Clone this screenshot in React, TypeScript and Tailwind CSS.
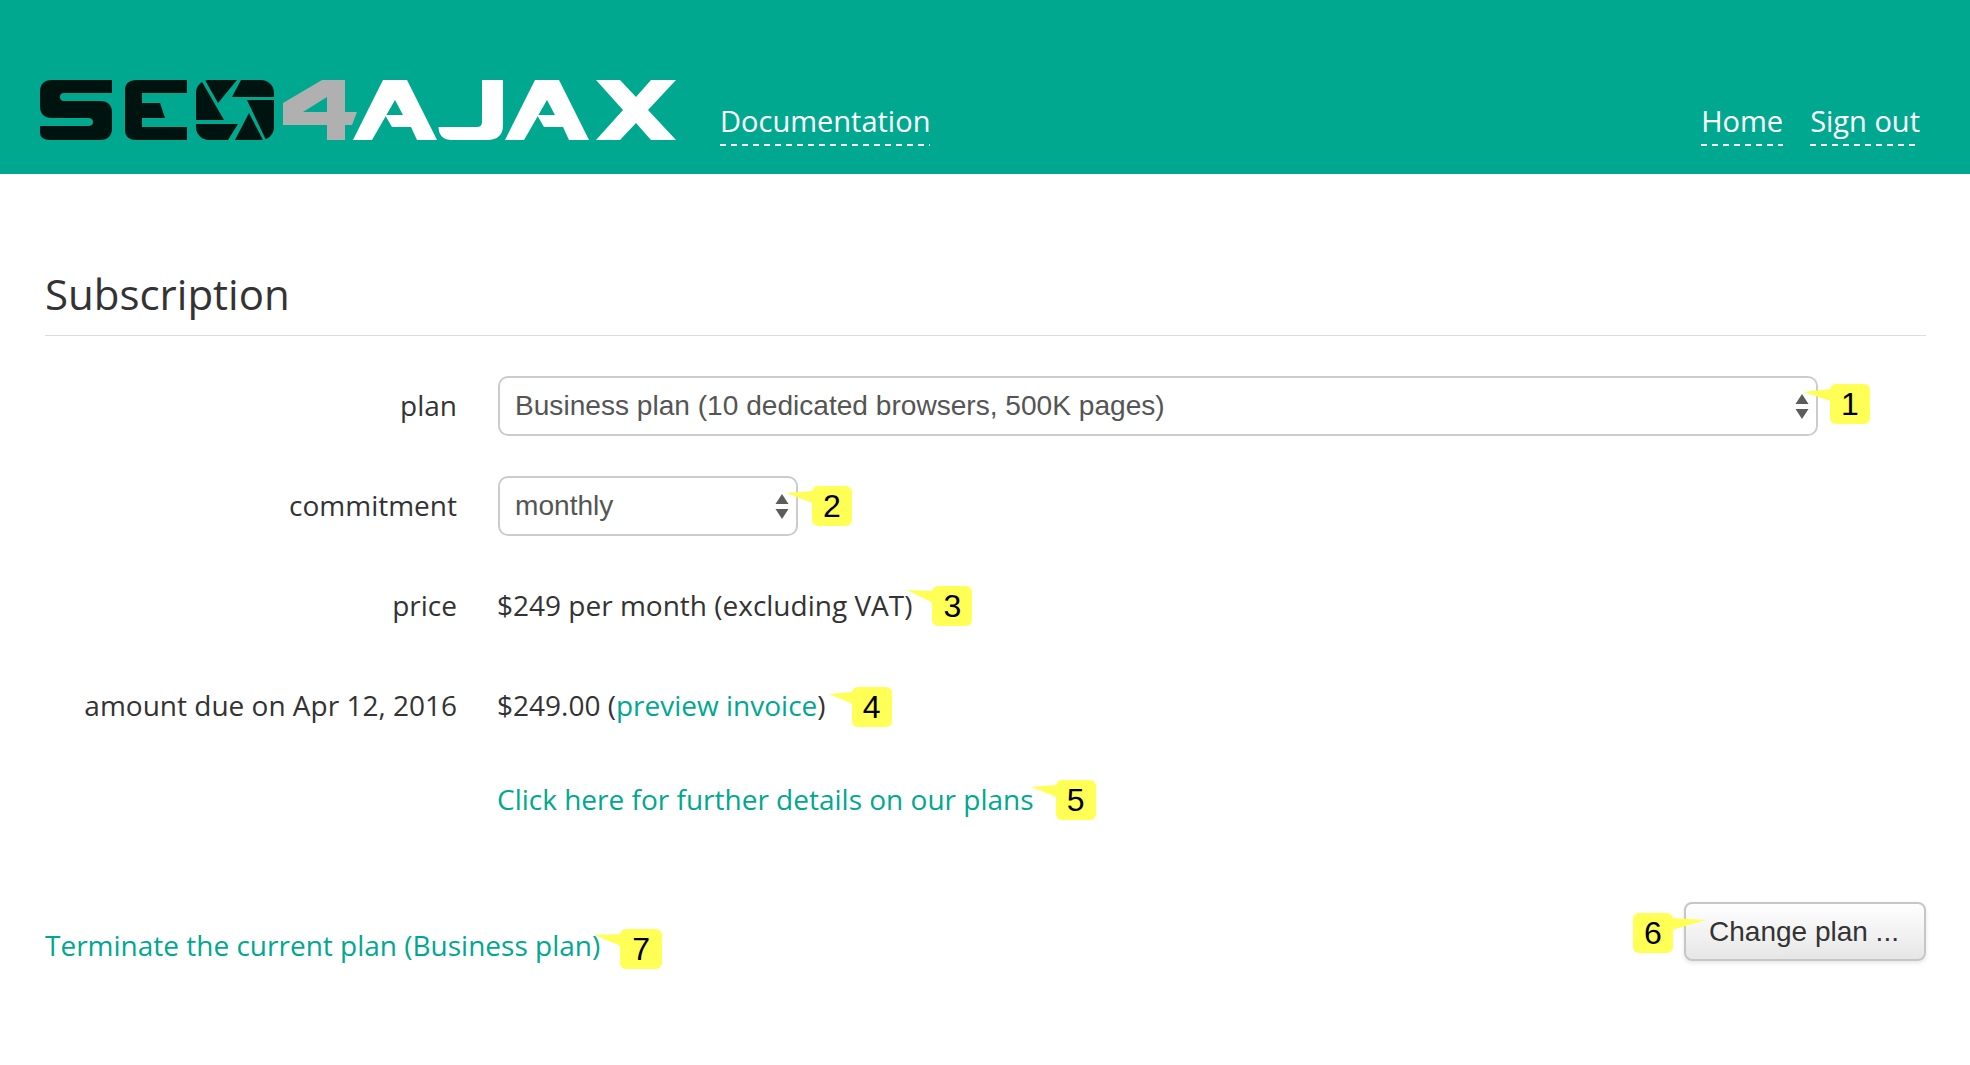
import React from "react";

function Logo() {
  return (
    <svg width="636" height="60" viewBox="0 0 636 60" className="block shrink-0">
      <defs>
        <clipPath id="ap">
          <rect x="156" y="0" width="78" height="60" rx="13" />
        </clipPath>
      </defs>
      <g fill="#00140f">
        <path d="M12 0H72V13H24Q20 13 20 17Q20 21 24 21H60Q72 21 72 33V48Q72 60 60 60H10Q0 60 0 52V46H48Q53 46 53 42Q53 38 48 38H12Q0 38 0 26V12Q0 0 12 0Z" />
        <path d="M97 0H147V13H102V23H120L125 38H102V47H147V60H97Q85 60 85 50V10Q85 0 97 0Z" />
        <g clipPath="url(#ap)">
          <polygon points="156,0 161,0 184,40 156,40" />
          <polygon points="165,0 197,0 178,23" />
          <polygon points="201,0 234,0 234,17 192,17" />
          <polygon points="207,20 234,20 234,60 226,60" />
          <polygon points="209,33 223,60 195,60" />
          <polygon points="156,44 198,44 188,60 156,60" />
        </g>
      </g>
      <path fill="#b0b0b0" fillRule="evenodd" d="M282 0H305V32H317L312 45H305V60H287V45H243V23ZM287 17L263 32H287Z" />
      <g fill="#ffffff">
        <path d="M343 0H367L397 60H377L371 47H352L345 35H363L355 20L332 60H313Z" />
        <path d="M442 0H463V45Q463 60 447 60H412Q399 60 398.5 47H437Q442 47 442 42Z" />
        <path d="M495 0H519L549 60H529L523 47H504L497 35H515L507 20L484 60H465Z" />
        <path d="M556 0H580L596 17L611 0H636L608 30L636 60H611L596 43L580 60H556L583 30Z" />
      </g>
    </svg>
  );
}

function Badge({ n, className, tipX, tipY }: { n: number; className: string; tipX: number; tipY: number }) {
  const baseX = tipX < 0 ? 1 : 39;
  return (
    <span className={"absolute h-10 rounded-md bg-[#ffff55] flex items-center justify-center text-[32px] leading-none text-black font-['Liberation_Sans',sans-serif] " + className}>
      <svg className="absolute left-0 top-0 overflow-visible" width="40" height="40">
        <polygon points={`${tipX},${tipY} ${baseX},5 ${baseX},17`} fill="#ffff55" />
      </svg>
      <span className="relative">{n}</span>
    </span>
  );
}

function NavLink({ children }: { children: React.ReactNode }) {
  return (
    <a className="block text-white text-[29px] leading-[39px]">
      {children}
      <span className="block h-[2px] mt-[4px] bg-[repeating-linear-gradient(90deg,#ffffff_0,#ffffff_6px,transparent_6px,transparent_11px)]" />
    </a>
  );
}

function Arrows() {
  return (
    <svg width="14" height="26" viewBox="0 0 14 26" className="absolute right-[7px] top-[16px] pointer-events-none">
      <polygon points="7,0 13.5,10 0.5,10" fill="#5c5c5c" />
      <polygon points="7,25 13.5,15 0.5,15" fill="#5c5c5c" />
    </svg>
  );
}

function Row({ label, children, className }: { label?: string; children: React.ReactNode; className?: string }) {
  return (
    <div className={"flex items-center " + (className ?? "")}>
      <div className="w-[412px] text-right text-[28px] text-[#333333] shrink-0">{label}</div>
      <div className="ml-[40px] flex-1 min-w-0 text-[28px] text-[#333333]">{children}</div>
    </div>
  );
}

function Field({ text, className, children }: { text: string; className: string; children: React.ReactNode }) {
  return (
    <div className={"relative ml-[1px] mt-[2px] h-[60px] rounded-[10px] border-2 border-[#cccccc] bg-white flex items-center pl-[15px] text-[28.1px] text-[#555555] font-['Liberation_Sans',sans-serif] " + className}>
      {text}
      <Arrows />
      {children}
    </div>
  );
}

export default function App() {
  return (
    <div className="min-h-[1065px] bg-white font-['Open_Sans',sans-serif]">
      <header className="h-[174px] bg-[#00a88f] flex items-start pl-10 pr-[50px]">
        <div className="mt-[80px]"><Logo /></div>
        <div className="ml-[44px] mt-[101px]"><NavLink>Documentation</NavLink></div>
        <nav className="ml-auto mt-[101px] flex gap-[27px]">
          <NavLink>Home</NavLink>
          <NavLink>Sign out</NavLink>
        </nav>
      </header>
      <main className="pl-[45px] pr-[44px]">
        <h1 className="mt-[93px] text-[42px] leading-[54px] font-normal text-[#333333] pb-[14px] border-b border-[#dddddd]">Subscription</h1>
        <div className="mt-[39px] flex flex-col">
          <Row label="plan" className="h-[60px]">
            <Field text="Business plan (10 dedicated browsers, 500K pages)" className="w-[1320px]">
              <Badge n={1} className="w-10 left-[1330px] top-[6px]" tipX={-27} tipY={8} />
            </Field>
          </Row>
          <Row label="commitment" className="h-[60px] mt-10">
            <Field text="monthly" className="w-[300px]">
              <Badge n={2} className="w-10 left-[312px] top-[8px]" tipX={-26} tipY={7} />
            </Field>
          </Row>
          <Row label="price" className="h-[60px] mt-10">
            <span className="relative inline-block">
              $249 per month (excluding VAT)
              <Badge n={3} className="w-10 left-[100%] ml-[20px] top-[2px]" tipX={-25} tipY={4} />
            </span>
          </Row>
          <Row label="amount due on Apr 12, 2016" className="h-[60px] mt-10">
            <span className="relative inline-block">
              $249.00 (<a className="text-[#00a88f]">preview invoice</a>)
              <Badge n={4} className="w-10 left-[100%] ml-[26px] top-[3px]" tipX={-23} tipY={7} />
            </span>
          </Row>
          <Row className="h-10 mt-[44px]">
            <a className="relative inline-block text-[#00a88f]">
              Click here for further details on our plans
              <Badge n={5} className="w-10 left-[100%] ml-[22px] top-[2px]" tipX={-25} tipY={7} />
            </a>
          </Row>
        </div>
        <div className="mt-[83px] flex items-start justify-between">
          <a className="relative mt-[23px] text-[28px] leading-10 text-[#00a88f]">
            Terminate the current plan (Business plan)
            <Badge n={7} className="w-[42px] left-[100%] ml-[20px] top-[4px]" tipX={-26} tipY={6} />
          </a>
          <button className="relative w-[242px] h-[59px] rounded-lg border-2 border-[#c6c6c6] bg-gradient-to-b from-white to-[#e6e6e6] shadow-[0_2px_4px_rgba(0,0,0,0.1)] text-[28px] text-[#333333] font-['Liberation_Sans',sans-serif] pb-[0px] pr-[2px]">
            Change plan ...
            <Badge n={6} className="w-10 left-[-53px] top-[9px]" tipX={73} tipY={7} />
          </button>
        </div>
      </main>
    </div>
  );
}
